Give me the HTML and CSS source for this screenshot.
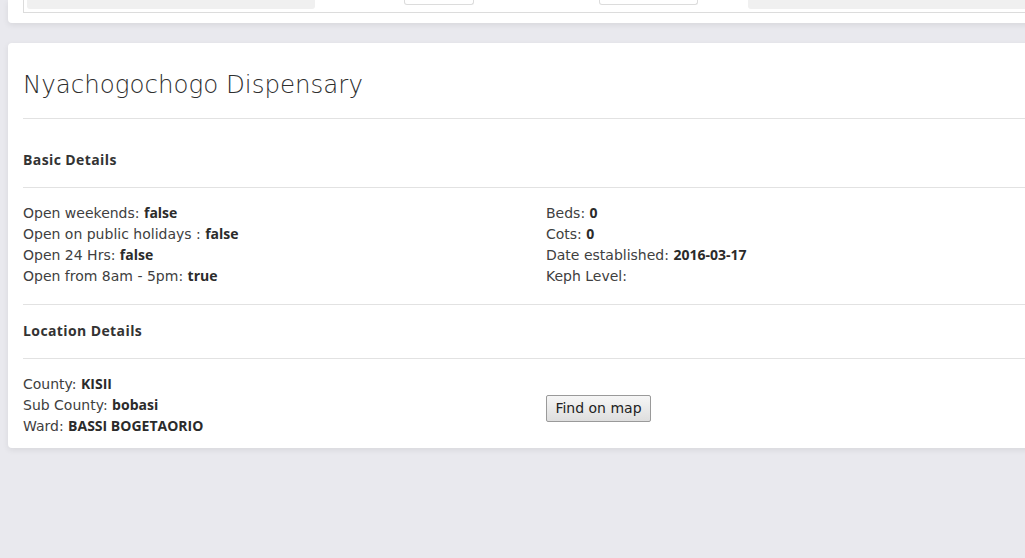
FILE: index.html
```html
<!DOCTYPE html>
<html lang="en">
<head>
<meta charset="utf-8">
<title>Nyachogochogo Dispensary</title>
<link rel="stylesheet" href="styles.css">
</head>
<body>
<div class="page">
  <div class="card card-top">
    <div class="toolbar">
      <div class="cell cell-a"></div>
      <div class="box box-a"></div>
      <div class="box box-b"></div>
      <div class="cell cell-b"></div>
    </div>
  </div>

  <div class="card card-main">
    <h3 class="title">Nyachogochogo Dispensary</h3>
    <div class="rule"></div>
    <h5 class="section section-first">Basic Details</h5>
    <div class="rule"></div>
    <div class="grid rows-basic">
      <div class="col">
        <div class="line">Open weekends: <b>false</b></div>
        <div class="line">Open on public holidays : <b>false</b></div>
        <div class="line">Open 24 Hrs: <b>false</b></div>
        <div class="line">Open from 8am - 5pm: <b>true</b></div>
      </div>
      <div class="col">
        <div class="line">Beds: <b>0</b></div>
        <div class="line">Cots: <b>0</b></div>
        <div class="line">Date established: <b>2016-03-17</b></div>
        <div class="line">Keph Level: </div>
      </div>
    </div>
    <div class="rule"></div>
    <h5 class="section">Location Details</h5>
    <div class="rule"></div>
    <div class="grid rows-location">
      <div class="col">
        <div class="line">County: <b>KISII</b></div>
        <div class="line">Sub County: <b>bobasi</b></div>
        <div class="line">Ward: <b>BASSI BOGETAORIO</b></div>
      </div>
      <div class="col col-center">
        <button class="map-btn" type="button">Find on map</button>
      </div>
    </div>
  </div>
</div>
</body>
</html>
```

FILE: styles.css
```css
html, body {
  margin: 0;
  padding: 0;
}
body {
  background: #e9e9ee;
  font-family: "DejaVu Sans", "Open Sans", sans-serif;
  color: #333;
  overflow: hidden;
  width: 1025px;
  height: 558px;
}
.page {
  padding-left: 8px;
  width: 1100px;
}
.card {
  background: #fff;
  border-radius: 4px;
  box-shadow: 0 2px 6px rgba(0, 0, 0, 0.08);
  box-sizing: border-box;
}
.card-top {
  height: 23px;
  border-radius: 0 0 4px 4px;
  padding: 0 0 10px 15px;
}
.toolbar {
  height: 13px;
  box-sizing: border-box;
  border-left: 1px solid #dcdcdc;
  border-bottom: 1px solid #dcdcdc;
  display: flex;
  align-items: flex-start;
  padding-left: 3px;
}
.cell {
  height: 9px;
  background: #f0f0f0;
  border-radius: 0 0 3px 3px;
}
.cell-a { width: 288px; }
.cell-b { flex: 1; margin-left: 50px; }
.box {
  height: 5px;
  box-sizing: border-box;
  border: 1px solid #dcdcdc;
  border-top: none;
  border-radius: 0 0 3px 3px;
  background: #fff;
}
.box-a { width: 70px; margin-left: 89px; }
.box-b { width: 99px; margin-left: 125px; }

.card-main {
  margin-top: 20px;
  width: 1080px;
  height: 405px;
  padding: 0 15px;
}
.title {
  margin: 0;
  padding: 26px 0 18px;
  font-size: 24.5px;
  line-height: 31px;
  font-weight: 200;
  color: #2e2e2e;
}
.rule {
  height: 1px;
  background: #e2e2e2;
}
.section {
  margin: 0;
  font-family: "Open Sans", "DejaVu Sans", sans-serif;
  font-size: 14px;
  line-height: 20px;
  font-weight: 700;
  letter-spacing: 0.4px;
  color: #333;
  padding: 16px 0 17px;
}
.section-first {
  padding: 31px 0 17px;
}
.grid {
  display: grid;
  grid-template-columns: 523px 1fr;
}
.rows-basic { padding: 15px 0 17px; }
.rows-location { padding: 15px 0 10px; }
.line {
  font-size: 14px;
  line-height: 21px;
  font-weight: 400;
  color: #404040;
  white-space: nowrap;
}
.line b {
  font-family: "Open Sans", "DejaVu Sans", sans-serif;
  font-weight: 700;
  line-height: 1;
  color: #2b2b2b;
}
.col-center {
  display: flex;
  align-items: center;
}
.map-btn {
  font-family: inherit;
  font-size: 14px;
  color: #222;
  height: 27px;
  width: 105px;
  padding: 0;
  margin-top: 5px;
  border: 1px solid #9a9a9a;
  border-radius: 2px;
  background: linear-gradient(#f6f6f6, #dedede);
}
```
